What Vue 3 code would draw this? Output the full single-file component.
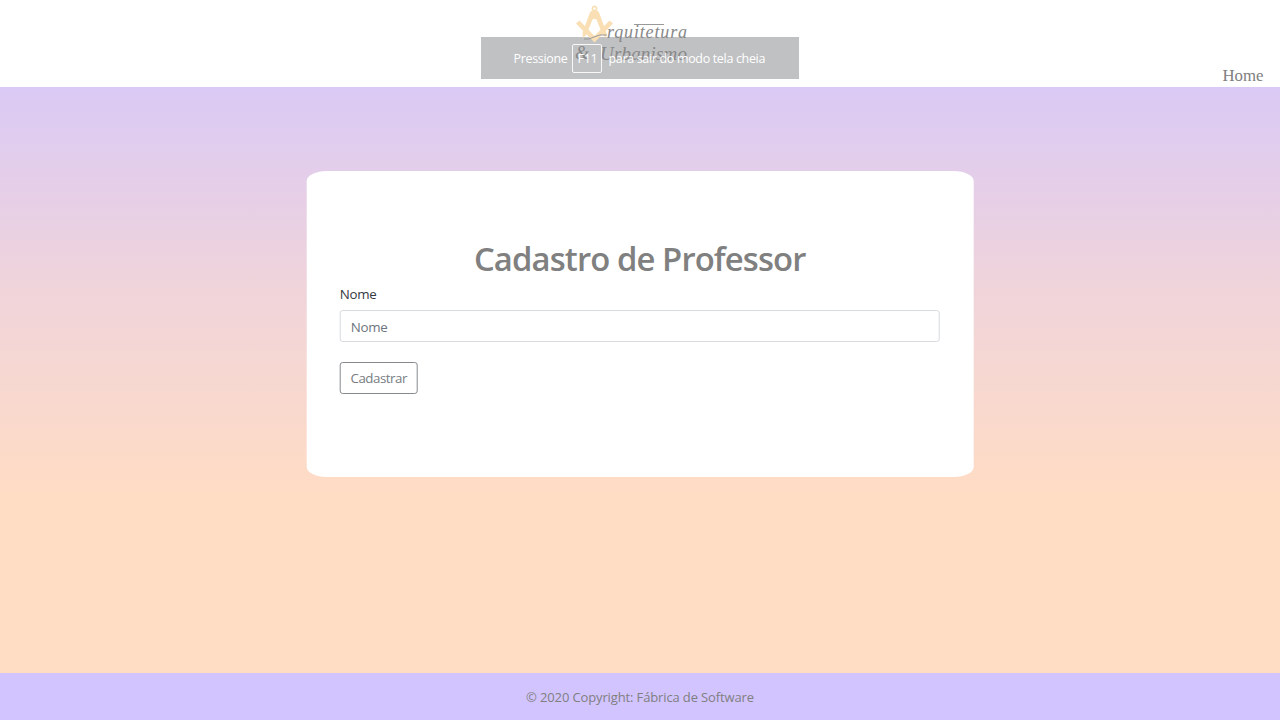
<script setup>
const title = 'Cadastro de Professor'
</script>

<template>
  <div class="page">
    <header class="header">
      <div class="notice-bg"></div>
      <svg class="logo" width="130" height="76" viewBox="0 0 130 76" role="img" aria-label="Arquitetura &amp; Urbanismo">
        <g fill="#fadfb4">
          <path fill-rule="evenodd" d="M24.500 5.500a3 3 0 0 1 2.200 5c2 1 2.600 2.300 3.200 4.300L36.500 33l-.5 5-3.500-3.500-6-15q-2-1.500-4 0l-6 15L13 38l-.5-5 6.600-18.200c.6-2 1.200-3.300 3.200-4.300a3 3 0 0 1 2.200-5zm0 1.700a1.300 1.300 0 1 0 .01 0z" />
          <path d="M6 23.500 9.500 20.500 24.500 36 39.500 20.500l3.500 3-18.500 19z" />
        </g>
        <g class="script">
          <text x="37" y="38" font-size="18" textLength="80">rquitetura</text>
          <text x="5" y="59" font-size="18" textLength="19">&amp;</text>
          <text x="30" y="60" font-size="19" textLength="87">Urbanismo</text>
        </g>
        <path d="M64 24.500H94M14 39q5 1 10-2t13-2" fill="none" stroke="#999" stroke-width="1" />
      </svg>
      <nav><a class="home">Home</a></nav>
      <div class="notice"><span>Pressione</span><kbd>F11</kbd><span>para sair do modo tela cheia</span></div>
    </header>
    <main>
      <form class="card" @submit.prevent>
        <h1>{{ title }}</h1>
        <label for="nome">Nome</label>
        <input id="nome" type="text" placeholder="Nome" />
        <button type="submit">Cadastrar</button>
      </form>
    </main>
    <footer>© 2020 Copyright: Fábrica de Software</footer>
  </div>
</template>

<style>
html, body { margin: 0; overflow: hidden; }
</style>

<style scoped>
* { box-sizing: border-box; }
.page {
  height: 720px;
  display: flex;
  flex-direction: column;
  font-family: "Open Sans", "Noto Sans", sans-serif;
  background: #fff;
}
.header { position: relative; height: 87px; flex: none; display: flex; justify-content: flex-end; align-items: flex-end; background: #fff; }
.logo { position: absolute; left: 570px; top: 0; overflow: visible; }
.script { font-family: "Liberation Serif", serif; font-style: italic; fill: #888; }
.home { display: block; margin-right: 16.500px; font: 16.800px/23px "Liberation Serif", serif; color: #808080; }
.notice, .notice-bg { position: absolute; left: 480.500px; top: 37px; width: 318.500px; height: 42px; }
.notice-bg { background: #c0c1c3; }
.notice {
  display: flex; align-items: center; padding-left: 33px;
  color: #fff; font-size: 12.500px; letter-spacing: -.33px; white-space: nowrap;
}
kbd { margin: 0 6px 0 5px; width: 30px; height: 29px; border: 1px solid #f8f8f8; border-radius: 2px; text-align: center; font: inherit; line-height: 27px; }
main { flex: 1; padding-top: 83.500px; background: linear-gradient(#dac9f5 0%, #f0d4da 35%, #ffdcc4 70%, #ffdcc4 100%); }
.card { width: 667px; height: 306.500px; margin: 0 auto; padding: 66px 33.500px 0; background: #fff; border-radius: 20px / 10px; transform: translateX(-.3px); }
h1 { margin: 0; height: 43px; text-align: center; font-size: 32.800px; line-height: 44px; font-weight: 600; color: #808080; letter-spacing: -.88px; }
label { display: block; height: 20px; margin: 4px 0 6px; font-size: 13.330px; line-height: 20px; color: #343a40; letter-spacing: -.3px; }
input { display: block; width: 600px; height: 32px; padding: 2px 10px 0; border: 1px solid #d7dbdf; border-radius: 3px; font: 13.330px "Open Sans", sans-serif; letter-spacing: -.3px; }
input::placeholder { color: #6c757d; opacity: 1; }
button { display: block; width: 78px; height: 32px; margin-top: 20px; padding: 0; border: 1px solid #868a8e; border-radius: 3px; background: #fff; color: #777d82; font: 13.330px "Open Sans", sans-serif; letter-spacing: -.5px; }
footer { flex: none; height: 47px; background: #d2c4ff; color: #808080; text-align: center; font-size: 13px; line-height: 48px; letter-spacing: -.13px; }
</style>
